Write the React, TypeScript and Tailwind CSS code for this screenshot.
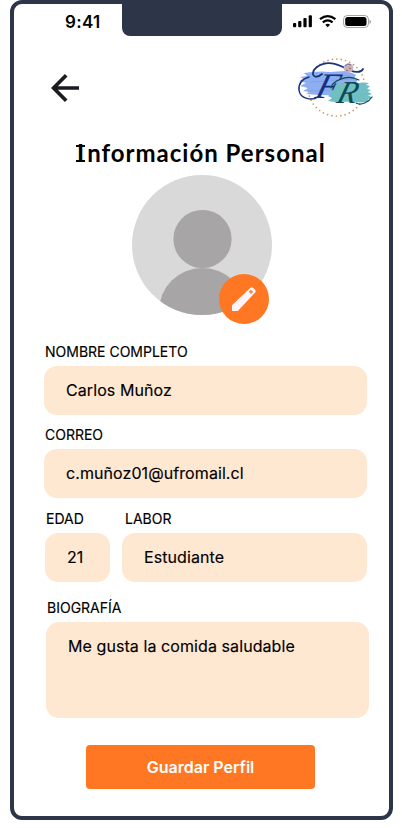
import type { ReactNode } from "react";

function StatusBar() {
  return (
    <header className="flex h-8 items-start">
      <div className="w-[108px] pl-[51px] pt-1.5 text-[17px] font-semibold leading-6 tracking-[0.3px]">9:41</div>
      <div className="-mt-1 h-9 w-40 rounded-b-lg bg-[#2d3648]" />
      <svg className="ml-[9px] mt-2" width="82" height="20" viewBox="291 12 82 20">
        <g fill="#000">
          <rect x="293" y="23" width="3.2" height="4.3" rx="1" />
          <rect x="298.2" y="21" width="3.2" height="6.3" rx="1" />
          <rect x="303.4" y="18" width="3.2" height="9.3" rx="1" />
          <rect x="308.7" y="15.2" width="3.2" height="12.1" rx="1" />
          <path d="M325.3 24.7q2.4-2.1 4.8 0l-2.4 2.6z" />
        </g>
        <g fill="none" stroke="#000" strokeWidth="2.2">
          <path d="M320 19.2q7.7-6.2 15.4 0" />
          <path d="M322.8 22.4q4.9-4.1 9.8 0" />
        </g>
        <rect x="343.5" y="15.5" width="25" height="12" rx="3.8" fill="none" stroke="#000" strokeOpacity=".35" />
        <rect x="345.2" y="17" width="21.3" height="9" rx="2.5" />
        <path d="M369.5 19.7v4.2q1.5-.7 1.5-2.1t-1.5-2.1" fill="#000" fillOpacity=".4" />
      </svg>
    </header>
  );
}

function Logo() {
  return (
    <svg width="80" height="66" viewBox="295 54 80 66">
      <circle cx="336.5" cy="87.5" r="28.5" fill="none" stroke="#cb975c" strokeWidth="1.7" strokeLinecap="round" strokeDasharray="0 4.48" />
      <path d="M304 73l8-1 10-.6 8 .5 15-.8 7 2 4 2-2 3 4 2-3 3 2 3-4 3-4 2-7 5-11-.8-12-.2-13-1 4-2-7-1 5-3-8-2 6-3-7-2 5-2-4-2 7-1z" fill="#8daef0" />
      <path d="M309 82l44-3M308 91l42-2M319 75l29 1" stroke="#7da0e8" strokeWidth=".8" />
      <path d="M332 84l10-.8 12 .3 9-1 6 .4-3 2 4 1-3 3 4 1-3 2 4 2-4 1.5 5 2-5 2 1 2-8 1-10-.6-16 .3-7-1 4-3-4-2 4-3-4-3 4-2z" fill="#6fbfc3" />
      <text transform="translate(314 98) skewX(-16)" fontFamily="'Liberation Serif', serif" fontStyle="italic" fontSize="36">
        <tspan x="0" y="0" fill="#15317f">F</tspan>
        <tspan x="23" y="5" fontSize="32" fill="#104a51">R</tspan>
      </text>
      <g fill="none" strokeLinecap="round">
        <path d="M322 74c-8 7-13-1-5-7 10-7 20-3 28 1 9 5 16 5 18 1" stroke="#17367e" strokeWidth="1.8" />
        <path d="M318 97c-6 4-18 2-19-7-.5-6 3-11 10-13" stroke="#17367e" strokeWidth="1.5" />
        <path d="M331 88c1-6 15-15 28-8M356 103c5 3 13-1 16-6" stroke="#104a51" strokeWidth="1.1" />
      </g>
      <circle cx="348.5" cy="68" r="4.8" fill="#bbb9d1" />
      <circle cx="348.8" cy="68.4" r="2.8" fill="#d9a9a3" />
      <path d="M345 66l3-2 3 1m-2 3l2 1m-5 1l2 1" fill="none" stroke="#665a83" strokeWidth=".8" />
    </svg>
  );
}

function Avatar() {
  return (
    <div className="relative ml-[118px] mt-[5px] h-[140px] w-[140px]">
      <svg width="140" height="140" viewBox="0 0 140 140">
        <clipPath id="portrait"><circle cx="70" cy="70" r="70" /></clipPath>
        <g clipPath="url(#portrait)">
          <path fill="#d9d9d9" d="M0 0h140v140H0z" />
          <circle cx="70.5" cy="64" r="29.1" fill="#a7a5a6" />
          <ellipse cx="70.5" cy="136" rx="43.5" ry="43" fill="#a7a5a6" />
        </g>
      </svg>
      <button aria-label="Editar" className="absolute left-[87px] top-[99px] flex size-[50px] items-center justify-center rounded-full bg-[#ff7722]">
        <svg width="26" height="26" viewBox="0 0 26 26">
          <path fill="#fff4fa" fillRule="evenodd" d="M1 19.3L19.2 1.9q1.6-1.3 3.1 0l1.6 1.6q1.6 1.7 0 3.2L6.8 25H1zM20.6 3.9h-1.3v1.3H18v1.3h1.3v1.3h1.3V6.5h1.3V5.2h-1.3z" />
        </svg>
      </button>
    </div>
  );
}

type FieldProps = { label: string; children: ReactNode; labelClass?: string; boxClass?: string };

function Field({ label, children, labelClass = "pl-px", boxClass = "h-[49px]" }: FieldProps) {
  return (
    <section>
      <h2 className={`mb-1 h-[21px] whitespace-nowrap pt-px text-sm leading-5 [-webkit-text-stroke:0.15px_#000] ${labelClass}`}>{label}</h2>
      <div className={`rounded-[13px] bg-[#ffe8d2] px-[22px] pt-3 text-base leading-6 tracking-[0.08px] [-webkit-text-stroke:0.15px_#000] ${boxClass}`}>{children}</div>
    </section>
  );
}

export default function App() {
  return (
    <div className="h-[828px] w-[402px] bg-white pl-2.5 font-['Inter',sans-serif] text-black">
      <main className="h-[820px] w-[383px] rounded-xl border-4 border-[#2d3648] bg-white">
        <StatusBar />
        <nav className="mt-[18px] flex h-[66px] items-start">
          <button aria-label="Volver" className="ml-[37px] mt-[19px]">
            <svg width="30" height="30" viewBox="0 0 30 30" fill="none" stroke="#1d1b20" strokeWidth="3.7">
              <path d="M28 15H3M15.2 2.2L2.6 15l12.6 12.8" />
            </svg>
          </button>
          <div className="ml-[214px]"><Logo /></div>
        </nav>
        <h1 className="relative ml-[61px] mt-[15px] h-[35px] w-[252px] whitespace-nowrap pl-0.5 font-['Lato',sans-serif] text-2xl font-bold leading-[35px] tracking-[1px] first-letter:mr-[2px]">
          Información Personal
          <span className="absolute left-[1px] top-[10px] h-[2px] w-[9px] bg-black" />
          <span className="absolute left-[1px] top-[25px] h-[2px] w-[9px] bg-black" />
        </h1>
        <Avatar />
        <div className="ml-[30px] mt-[26px] w-[323px]">
          <Field label="NOMBRE COMPLETO">Carlos Muñoz</Field>
          <div className="mt-[9px]"><Field label="CORREO">c.muñoz01@ufromail.cl</Field></div>
          <div className="mt-[10px] grid grid-cols-[65px_245px] gap-3 pl-px">
            <Field label="EDAD">21</Field>
            <Field label="LABOR" labelClass="pl-[3px]">Estudiante</Field>
          </div>
          <div className="ml-[2px] mt-[15px] w-[323px]">
            <Field label="BIOGRAFÍA" boxClass="h-24">Me gusta la comida saludable</Field>
          </div>
        </div>
        <button className="ml-[72px] mt-[27px] h-11 w-[229px] rounded bg-[#ff7722] text-base font-semibold leading-6 text-white">Guardar Perfil</button>
      </main>
    </div>
  );
}
